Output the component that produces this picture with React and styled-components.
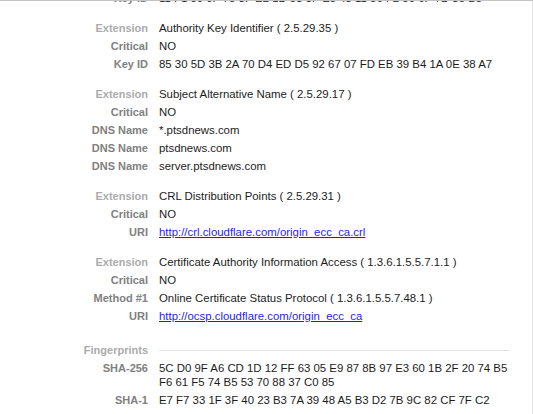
import React from 'react';
import styled, { createGlobalStyle } from 'styled-components';

const GlobalStyle = createGlobalStyle`
  html, body {
    margin: 0;
    padding: 0;
    background: #ffffff;
  }
  body {
    font-family: 'Liberation Sans', Arial, Helvetica, sans-serif;
  }
`;

const Pane = styled.div`
  box-sizing: border-box;
  width: 533px;
  height: 414px;
  overflow: hidden;
  background: #ffffff;
  border-top: 1px solid #c4c4c4;
  border-right: 1px solid #e2e2e2;
`;

// content is scrolled a little, so the first row is cut by the top edge
const Details = styled.div`
  display: flex;
  flex-direction: column;
  gap: 16px;
  margin-top: -10px;
  padding-right: 15px;
`;

const Section = styled.div`
  display: flex;
  flex-direction: column;
  gap: 4px;
  margin-top: ${(p) => (p.$spaced ? '4px' : '0')};
`;

const Row = styled.div`
  display: grid;
  grid-template-columns: 148px 1fr;
  column-gap: 11px;
  line-height: 14px;
`;

const Label = styled.div`
  text-align: right;
  font-size: 11px;
  font-weight: bold;
  white-space: nowrap;
  color: ${(p) => (p.$heading ? '#ababab' : '#808080')};
`;

const Value = styled.div`
  font-size: 11.4px;
  color: #1c1c1c;
`;

const Link = styled.a`
  font-size: 11.4px;
  color: #1f1fe8;
  text-decoration: underline;
  cursor: pointer;
`;

const Rule = styled.div`
  align-self: center;
  height: 1px;
  margin-right: 7px;
  background: #e4e4e4;
`;

const sections = [
  {
    rows: [['Key ID', '11 F1 50 0F 75 3F E2 1D 53 3F E5 48 11 56 F2 50 6F 7D 35 B5']],
  },
  {
    rows: [
      ['Extension', 'Authority Key Identifier ( 2.5.29.35 )'],
      ['Critical', 'NO'],
      ['Key ID', '85 30 5D 3B 2A 70 D4 ED D5 92 67 07 FD EB 39 B4 1A 0E 38 A7'],
    ],
  },
  {
    rows: [
      ['Extension', 'Subject Alternative Name ( 2.5.29.17 )'],
      ['Critical', 'NO'],
      ['DNS Name', '*.ptsdnews.com'],
      ['DNS Name', 'ptsdnews.com'],
      ['DNS Name', 'server.ptsdnews.com'],
    ],
  },
  {
    rows: [
      ['Extension', 'CRL Distribution Points ( 2.5.29.31 )'],
      ['Critical', 'NO'],
      ['URI', 'http://crl.cloudflare.com/origin_ecc_ca.crl', true],
    ],
  },
  {
    rows: [
      ['Extension', 'Certificate Authority Information Access ( 1.3.6.1.5.5.7.1.1 )'],
      ['Critical', 'NO'],
      ['Method #1', 'Online Certificate Status Protocol ( 1.3.6.1.5.5.7.48.1 )'],
      ['URI', 'http://ocsp.cloudflare.com/origin_ecc_ca', true],
    ],
  },
];

const fingerprints = [
  ['SHA-256', '5C D0 9F A6 CD 1D 12 FF 63 05 E9 87 8B 97 E3 60 1B 2F 20 74 B5 F6 61 F5 74 B5 53 70 88 37 C0 85'],
  ['SHA-1', 'E7 F7 33 1F 3F 40 23 B3 7A 39 48 A5 B3 D2 7B 9C 82 CF 7F C2'],
];

export default function App() {
  return (
    <>
      <GlobalStyle />
      <Pane>
        <Details>
          {sections.map((section, i) => (
            <Section key={i}>
              {section.rows.map(([label, value, isLink], j) => (
                <Row key={j}>
                  <Label $heading={label === 'Extension'}>{label}</Label>
                  {isLink ? <Link href={value}>{value}</Link> : <Value>{value}</Value>}
                </Row>
              ))}
            </Section>
          ))}
          <Section $spaced>
            <Row>
              <Label $heading>Fingerprints</Label>
              <Rule />
            </Row>
            {fingerprints.map(([label, value]) => (
              <Row key={label}>
                <Label>{label}</Label>
                <Value>{value}</Value>
              </Row>
            ))}
          </Section>
        </Details>
      </Pane>
    </>
  );
}
